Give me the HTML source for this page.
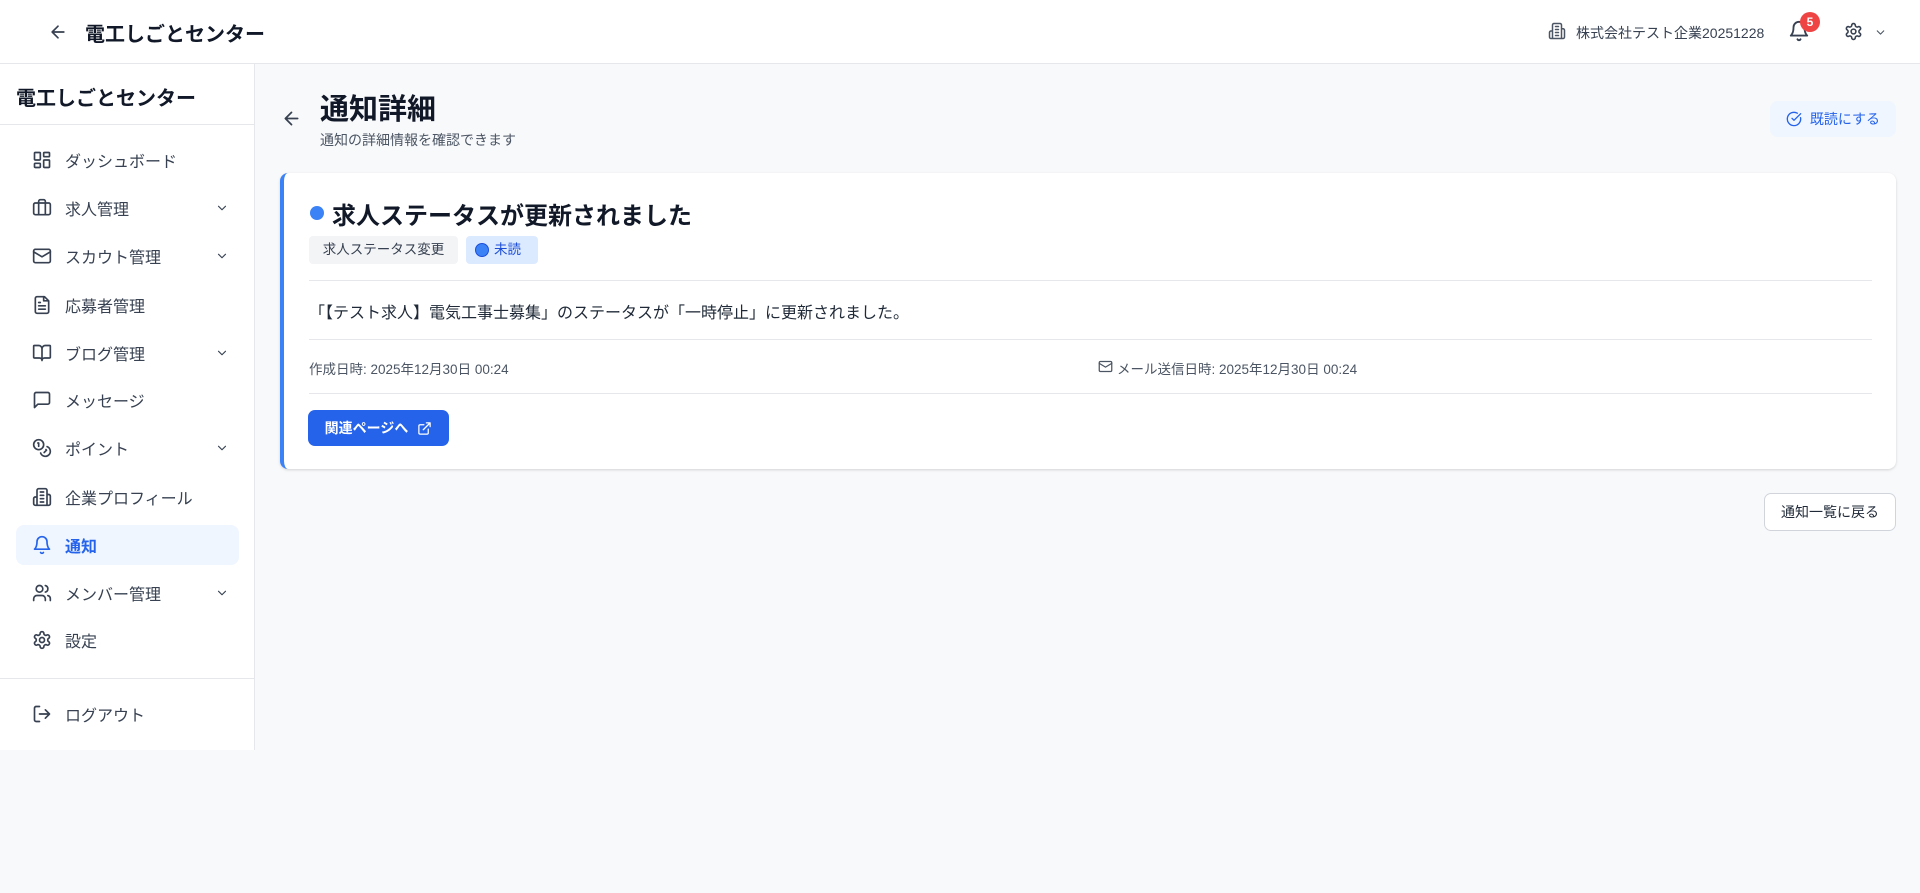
<!DOCTYPE html>
<html><head><meta charset="utf-8"><style>
*{box-sizing:border-box;margin:0;padding:0}
body{width:1920px;height:893px;background:#f8f9fb;font-family:"Liberation Sans","Noto Sans CJK JP",sans-serif;color:#111827;position:relative;overflow:hidden}
.abs{position:absolute}
svg{fill:none;stroke:currentColor;stroke-width:2;stroke-linecap:round;stroke-linejoin:round}
.hdr{left:0;top:0;width:1920px;height:64px;background:#fff;border-bottom:1px solid #e5e7eb}
.side{left:0;top:64px;width:255px;height:686px;background:#fff;border-right:1px solid #e5e7eb}
.nav{position:absolute;left:16px;width:223px;height:40px;display:flex;align-items:center;font-size:16px;color:#374151}
.nav svg{position:absolute;left:16px;width:20px;height:20px;color:#374151}
.nav span{position:absolute;left:49px}
.nav .ch{left:auto;right:10px;width:14px;height:14px;position:absolute}
.card{left:280px;top:173px;width:1616px;height:296px;background:#fff;border-radius:8px;border-left:4px solid #3b82f6;box-shadow:0 1px 3px rgba(0,0,0,.1),0 1px 2px rgba(0,0,0,.06)}
.hr{position:absolute;left:25px;right:24px;height:1px;background:#e5e7eb}
</style></head><body>
<div class="abs hdr">
 <svg class="abs" style="left:48px;top:22px;width:20px;height:20px;color:#374151" viewBox="0 0 24 24"><path d="M19 12H5M12 19l-7-7 7-7"/></svg>
 <div class="abs" style="left:85px;top:18px;font-size:20px;font-weight:700">電工しごとセンター</div>
 <svg class="abs" style="left:1548px;top:22px;width:18px;height:18px;color:#4b5563" viewBox="0 0 24 24"><path d="M6 22V4a2 2 0 0 1 2-2h8a2 2 0 0 1 2 2v18zM6 12H4a2 2 0 0 0-2 2v6a2 2 0 0 0 2 2h2M18 9h2a2 2 0 0 1 2 2v9a2 2 0 0 1-2 2h-2M10 6h4M10 10h4M10 14h4M10 18h4"/></svg>
 <div class="abs" style="left:1576px;top:23px;font-size:14px;color:#374151">株式会社テスト企業20251228</div>
 <svg class="abs" style="left:1788px;top:20px;width:22px;height:22px;color:#374151" viewBox="0 0 24 24"><path d="M6 8a6 6 0 0 1 12 0c0 7 3 9 3 9H3s3-2 3-9M10.3 21a1.94 1.94 0 0 0 3.4 0"/></svg>
 <div class="abs" style="left:1800px;top:12px;width:20px;height:20px;border-radius:50%;background:#ef4444;color:#fff;font-size:12px;font-weight:700;text-align:center;line-height:20px">5</div>
 <svg class="abs" style="left:1844px;top:22px;width:19px;height:19px;color:#374151" viewBox="0 0 24 24"><path d="M12.22 2h-.44a2 2 0 0 0-2 2v.18a2 2 0 0 1-1 1.73l-.43.25a2 2 0 0 1-2 0l-.15-.08a2 2 0 0 0-2.73.73l-.22.38a2 2 0 0 0 .73 2.73l.15.1a2 2 0 0 1 1 1.72v.51a2 2 0 0 1-1 1.74l-.15.09a2 2 0 0 0-.73 2.730l.22.38a2 2 0 0 0 2.73.73l.15-.08a2 2 0 0 1 2 0l.43.25a2 2 0 0 1 1 1.73V20a2 2 0 0 0 2 2h.44a2 2 0 0 0 2-2v-.18a2 2 0 0 1 1-1.73l.43-.25a2 2 0 0 1 2 0l.15.08a2 2 0 0 0 2.73-.73l.22-.39a2 2 0 0 0-.73-2.73l-.15-.08a2 2 0 0 1-1-1.74v-.5a2 2 0 0 1 1-1.74l.15-.09a2 2 0 0 0 .73-2.73l-.22-.38a2 2 0 0 0-2.73-.73l-.15.08a2 2 0 0 1-2 0l-.43-.25a2 2 0 0 1-1-1.73V4a2 2 0 0 0-2-2z"/><circle cx="12" cy="12" r="3"/></svg>
 <svg class="abs" style="left:1874px;top:26px;width:13px;height:13px;color:#4b5563" viewBox="0 0 24 24"><path d="M6 9l6 6 6-6"/></svg>
</div>
<div class="abs side">
 <div class="abs" style="left:16px;top:18px;font-size:20px;font-weight:700">電工しごとセンター</div>
 <div class="abs" style="left:0;top:60px;width:254px;height:1px;background:#e5e7eb"></div>
 <div class="abs" style="left:0;top:614px;width:254px;height:1px;background:#e5e7eb"></div>
</div>
<div class="nav" style="top:140px"><svg viewBox="0 0 24 24"><rect x="3" y="3" width="7" height="9" rx="1"/><rect x="14" y="3" width="7" height="5" rx="1"/><rect x="14" y="12" width="7" height="9" rx="1"/><rect x="3" y="16" width="7" height="5" rx="1"/></svg><span>ダッシュボード</span></div>
<div class="nav" style="top:188px"><svg viewBox="0 0 24 24"><path d="M16 20V4a2 2 0 0 0-2-2h-4a2 2 0 0 0-2 2v16"/><rect x="2" y="6" width="20" height="14" rx="2"/></svg><span>求人管理</span><svg class="ch" viewBox="0 0 24 24"><path d="M6 9l6 6 6-6"/></svg></div>
<div class="nav" style="top:236px"><svg viewBox="0 0 24 24"><rect x="2" y="4" width="20" height="16" rx="2"/><path d="M22 7l-10 6L2 7"/></svg><span>スカウト管理</span><svg class="ch" viewBox="0 0 24 24"><path d="M6 9l6 6 6-6"/></svg></div>
<div class="nav" style="top:285px"><svg viewBox="0 0 24 24"><path d="M15 2H6a2 2 0 0 0-2 2v16a2 2 0 0 0 2 2h12a2 2 0 0 0 2-2V7z"/><path d="M14 2v5h5M16 13H8M16 17H8M10 9H8"/></svg><span>応募者管理</span></div>
<div class="nav" style="top:333px"><svg viewBox="0 0 24 24"><path d="M12 7v14M3 18a1 1 0 0 1-1-1V4a1 1 0 0 1 1-1h5a4 4 0 0 1 4 4 4 4 0 0 1 4-4h5a1 1 0 0 1 1 1v13a1 1 0 0 1-1 1h-6a3 3 0 0 0-3 3 3 3 0 0 0-3-3z"/></svg><span>ブログ管理</span><svg class="ch" viewBox="0 0 24 24"><path d="M6 9l6 6 6-6"/></svg></div>
<div class="nav" style="top:380px"><svg viewBox="0 0 24 24"><path d="M21 15a2 2 0 0 1-2 2H7l-4 4V5a2 2 0 0 1 2-2h14a2 2 0 0 1 2 2z"/></svg><span>メッセージ</span></div>
<div class="nav" style="top:428px"><svg viewBox="0 0 24 24"><circle cx="8" cy="8" r="6"/><path d="M18.09 10.37A6 6 0 1 1 10.34 18M7 6h1v4M16.71 13.88l.7.71-2.82 2.82"/></svg><span>ポイント</span><svg class="ch" viewBox="0 0 24 24"><path d="M6 9l6 6 6-6"/></svg></div>
<div class="nav" style="top:477px"><svg viewBox="0 0 24 24"><path d="M6 22V4a2 2 0 0 1 2-2h8a2 2 0 0 1 2 2v18zM6 12H4a2 2 0 0 0-2 2v6a2 2 0 0 0 2 2h2M18 9h2a2 2 0 0 1 2 2v9a2 2 0 0 1-2 2h-2M10 6h4M10 10h4M10 14h4M10 18h4"/></svg><span>企業プロフィール</span></div>
<div class="nav" style="top:525px;background:#eff6ff;border-radius:8px;color:#2563eb;font-weight:700"><svg viewBox="0 0 24 24" style="color:#2563eb"><path d="M6 8a6 6 0 0 1 12 0c0 7 3 9 3 9H3s3-2 3-9M10.3 21a1.94 1.94 0 0 0 3.4 0"/></svg><span>通知</span></div>
<div class="nav" style="top:573px"><svg viewBox="0 0 24 24"><path d="M16 21v-2a4 4 0 0 0-4-4H6a4 4 0 0 0-4 4v2"/><circle cx="9" cy="7" r="4"/><path d="M22 21v-2a4 4 0 0 0-3-3.87M16 3.13a4 4 0 0 1 0 7.75"/></svg><span>メンバー管理</span><svg class="ch" viewBox="0 0 24 24"><path d="M6 9l6 6 6-6"/></svg></div>
<div class="nav" style="top:620px"><svg viewBox="0 0 24 24"><path d="M12.22 2h-.44a2 2 0 0 0-2 2v.18a2 2 0 0 1-1 1.73l-.43.25a2 2 0 0 1-2 0l-.15-.08a2 2 0 0 0-2.73.73l-.22.38a2 2 0 0 0 .73 2.73l.15.1a2 2 0 0 1 1 1.72v.51a2 2 0 0 1-1 1.74l-.15.09a2 2 0 0 0-.73 2.73l.22.38a2 2 0 0 0 2.73.73l.15-.08a2 2 0 0 1 2 0l.43.25a2 2 0 0 1 1 1.73V20a2 2 0 0 0 2 2h.44a2 2 0 0 0 2-2v-.18a2 2 0 0 1 1-1.73l.43-.25a2 2 0 0 1 2 0l.15.08a2 2 0 0 0 2.73-.73l.22-.39a2 2 0 0 0-.73-2.73l-.15-.08a2 2 0 0 1-1-1.74v-.5a2 2 0 0 1 1-1.74l.15-.09a2 2 0 0 0 .73-2.73l-.22-.38a2 2 0 0 0-2.73-.73l-.15.08a2 2 0 0 1-2 0l-.43-.25a2 2 0 0 1-1-1.73V4a2 2 0 0 0-2-2z"/><circle cx="12" cy="12" r="3"/></svg><span>設定</span></div>
<div class="nav" style="top:694px"><svg viewBox="0 0 24 24"><path d="M9 21H5a2 2 0 0 1-2-2V5a2 2 0 0 1 2-2h4M16 17l5-5-5-5M21 12H9"/></svg><span>ログアウト</span></div>

<svg class="abs" style="left:281px;top:108px;width:21px;height:21px;color:#374151" viewBox="0 0 24 24"><path d="M19 12H5M12 19l-7-7 7-7"/></svg>
<div class="abs" style="left:320px;top:86px;font-size:29px;font-weight:700">通知詳細</div>
<div class="abs" style="left:320px;top:130px;font-size:14px;color:#4b5563">通知の詳細情報を確認できます</div>
<div class="abs" style="left:1770px;top:101px;width:126px;height:36px;background:#eff6ff;border-radius:8px;color:#2563eb;font-size:14px;display:flex;align-items:center;justify-content:center;gap:8px"><svg style="width:16px;height:16px" viewBox="0 0 24 24"><path d="M21.8 10A10 10 0 1 1 17 3.3"/><path d="M9 11l3 3L22 4"/></svg>既読にする</div>

<div class="abs card">
 <div class="abs" style="left:26px;top:33px;width:14px;height:14px;border-radius:50%;background:#3b82f6"></div>
 <div class="abs" style="left:48px;top:23px;font-size:24px;font-weight:700">求人ステータスが更新されました</div>
 <div class="abs" style="left:25px;top:63px;width:149px;height:28px;background:#f3f4f6;border-radius:4px;font-size:13.5px;color:#374151;line-height:28px;text-align:center">求人ステータス変更</div>
 <div class="abs" style="left:182px;top:63px;width:72px;height:28px;background:#dbeafe;border-radius:4px;font-size:13.5px;color:#1d4ed8;line-height:28px;padding-left:28px">未読</div>
 <div class="abs" style="left:191px;top:70px;width:14px;height:14px;border-radius:50%;background:#3b82f6;border:1px solid #1d4ed8"></div>
 <div class="hr" style="top:107px"></div>
 <div class="abs" style="left:25px;top:126px;font-size:16px;color:#1f2937">「【テスト求人】電気工事士募集」のステータスが「一時停止」に更新されました。</div>
 <div class="hr" style="top:166px"></div>
 <div class="abs" style="left:25px;top:185px;font-size:13.5px;color:#4b5563">作成日時: 2025年12月30日 00:24</div>
 <svg class="abs" style="left:814px;top:186px;width:15px;height:15px;color:#4b5563" viewBox="0 0 24 24"><rect x="2" y="4" width="20" height="16" rx="2"/><path d="M22 7l-10 6L2 7"/></svg>
 <div class="abs" style="left:833px;top:185px;font-size:13.5px;color:#4b5563">メール送信日時: 2025年12月30日 00:24</div>
 <div class="hr" style="top:220px"></div>
 <div class="abs" style="left:24px;top:237px;width:141px;height:36px;background:#2563eb;border-radius:7px;color:#fff;font-size:14px;font-weight:700;display:flex;align-items:center;justify-content:center;gap:9px">関連ページへ<svg style="width:15px;height:15px" viewBox="0 0 24 24"><path d="M15 3h6v6M10 14L21 3M18 13v6a2 2 0 0 1-2 2H5a2 2 0 0 1-2-2V8a2 2 0 0 1 2-2h6"/></svg></div>
</div>
<div class="abs" style="left:1764px;top:493px;width:132px;height:38px;background:#fff;border:1px solid #d1d5db;border-radius:7px;font-size:14px;color:#1f2937;line-height:36px;text-align:center">通知一覧に戻る</div>
</body></html>
